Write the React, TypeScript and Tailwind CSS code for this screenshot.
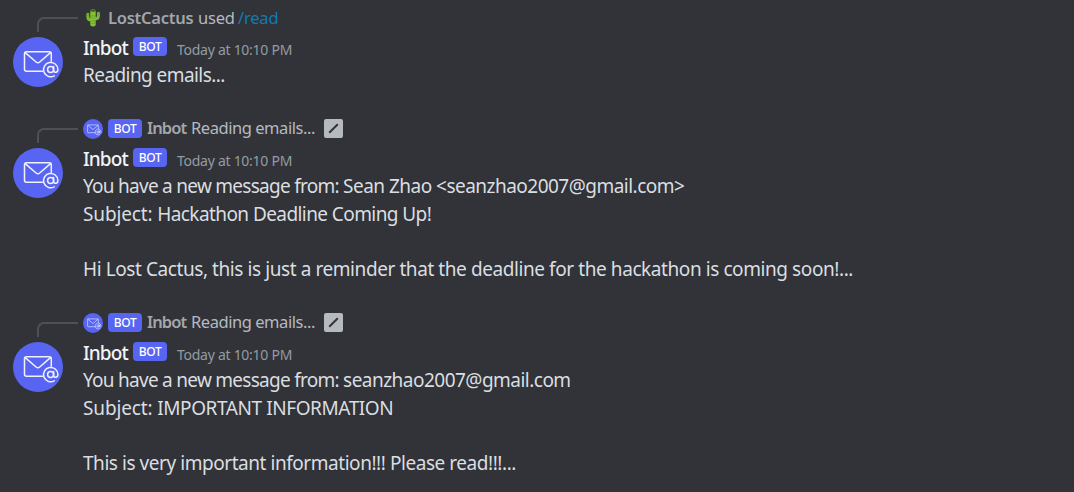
import type { ReactNode } from "react";

type Line = { label?: string; labelTracking?: string; text: string; tracking: string };

function MailLogo({ className }: { className: string }) {
  return (
    <svg viewBox="0 0 50 50" className={className} fill="none" stroke="#f1f2fe" strokeLinecap="round" strokeLinejoin="round">
      <circle cx="25" cy="25" r="25" fill="#5865f2" stroke="none" />
      <path d="M29.5 34.3H13.5a2 2 0 0 1-2-2V16.8a2 2 0 0 1 2-2h22.8a2 2 0 0 1 2 2v7.4" strokeWidth="1.5" />
      <path d="m12.2 15.6 10.9 9.4a2.8 2.8 0 0 0 3.6 0L37.5 15.6" strokeWidth="1.5" />
      <circle cx="37.6" cy="32.6" r="3" strokeWidth="1.5" />
      <path d="M40.6 29.6v3.6c0 3 4.3 2.8 4.3-.8a7.2 7.2 0 1 0-3.7 6.5" strokeWidth="1.5" />
    </svg>
  );
}

function Cactus() {
  return (
    <svg viewBox="0 0 20 20" className="size-5 shrink-0" fill="none">
      <path d="M4.8 6.2v2.6q0 3.2 3.2 3.2h1.5M15.4 5.2v2.6q0 3-3 3H11" stroke="#7cb82f" strokeWidth="3" strokeLinecap="round" />
      <path d="M7.3 4a2.7 2.7 0 0 1 5.4 0v13.2q-2.7 2.8-5.4 0Z" fill="#86c232" />
      <path d="M9 7v9M11.2 7v9M4.8 6.5v2M15.4 5.8v2" stroke="#55891f" strokeWidth=".7" strokeDasharray="1.5 1" />
      <path d="M7.4 3.3Q8 1.2 10 1.2t2.6 2.1Q10 4.8 7.4 3.3" fill="#49661f" />
    </svg>
  );
}

function BotTag({ className }: { className: string }) {
  return (
    <span className={`flex h-[19px] w-[34px] shrink-0 items-center justify-center rounded-[4px] bg-[#5865f2] text-[12px] font-medium leading-none tracking-[-0.3px] text-white ${className}`}>
      BOT
    </span>
  );
}

function EditIcon() {
  return (
    <svg viewBox="0 0 19 19" className="ml-[9px] size-[19px] shrink-0">
      <rect width="19" height="19" rx="2" fill="#b5bac1" />
      <path d="m5.2 13.8 8.6-8.6" stroke="#313338" strokeWidth="2" />
    </svg>
  );
}

function BotReply() {
  return (
    <div className="-mt-[1.5px] flex items-center">
      <MailLogo className="size-5 shrink-0" />
      <BotTag className="ml-[5px]" />
      <span className="ml-[5px] w-[39px] font-semibold text-[#a3a6aa] tracking-[-0.9px]">Inbot</span>
      <span className="ml-[5px] w-[124px] tracking-[-0.45px]">Reading emails...</span>
      <EditIcon />
    </div>
  );
}

function Message({ reply, lines }: { reply: ReactNode; lines: Line[] }) {
  return (
    <article className="flex">
      <div className="flex w-[83px] shrink-0 flex-col pl-[13px]">
        <div className="ml-6 mt-[10px] h-[15px] w-[41px] rounded-tl-[7px] border-l-2 border-t-2 border-[#4e5058]" />
        <MailLogo className="mt-[5px] size-[50px]" />
      </div>
      <div className="min-w-0 flex-1">
        <div className="flex h-[22.5px] items-center whitespace-nowrap text-[16.5px] text-[#b5bac1]">{reply}</div>
        <div className="mt-[5px] flex h-[27.5px] items-center whitespace-nowrap">
          <span className="w-[45px] text-[19px] font-medium tracking-[-0.9px] text-[#f2f3f5]">Inbot</span>
          <BotTag className="mb-[3px] ml-[5px]" />
          <span className="ml-[10px] mt-[3px] text-[14px] tracking-[-0.27px] text-[#949ba4]">Today at 10:10 PM</span>
        </div>
        <div className="text-[19px] leading-[27.5px] text-[#dbdee1]">
          {lines.map((line, i) => (
            <p key={i} className={`h-[27.5px] whitespace-nowrap ${line.tracking}`}>
              {line.label && <span className={line.labelTracking}>{line.label} </span>}
              {line.text}
            </p>
          ))}
        </div>
      </div>
    </article>
  );
}

export default function App() {
  return (
    <main className="flex h-[492px] w-[1074px] flex-col gap-[28.95px] overflow-hidden bg-[#313338] pt-[6.75px] font-['Noto_Sans',sans-serif]">
      <Message
        reply={
          <>
            <Cactus />
            <span className="ml-[5px] w-[86px] font-semibold text-[#a3a6aa] tracking-[-0.25px]">LostCactus</span>
            <span className="ml-[4px] w-[36px] tracking-[-0.2px]">used</span>
            <span className="ml-[4px] tracking-[-0.2px] text-[#0b7cb3]">/read</span>
          </>
        }
        lines={[{ text: "Reading emails...", tracking: "tracking-[-0.57px]" }]}
      />
      <Message
        reply={<BotReply />}
        lines={[
          { label: "You have a new message from:", labelTracking: "tracking-[-0.73px]", text: "Sean Zhao <seanzhao2007@gmail.com>", tracking: "tracking-[-0.52px]" },
          { label: "Subject:", labelTracking: "tracking-[-0.14px]", text: "Hackathon Deadline Coming Up!", tracking: "tracking-[-0.58px]" },
          { text: "", tracking: "" },
          { text: "Hi Lost Cactus, this is just a reminder that the deadline for the hackathon is coming soon!...", tracking: "tracking-[-0.42px]" },
        ]}
      />
      <Message
        reply={<BotReply />}
        lines={[
          { label: "You have a new message from:", labelTracking: "tracking-[-0.73px]", text: "seanzhao2007@gmail.com", tracking: "tracking-[-0.52px]" },
          { label: "Subject:", labelTracking: "tracking-[-0.14px]", text: "IMPORTANT INFORMATION", tracking: "tracking-[-0.42px]" },
          { text: "", tracking: "" },
          { text: "This is very important information!!! Please read!!!...", tracking: "tracking-[-0.45px]" },
        ]}
      />
    </main>
  );
}
